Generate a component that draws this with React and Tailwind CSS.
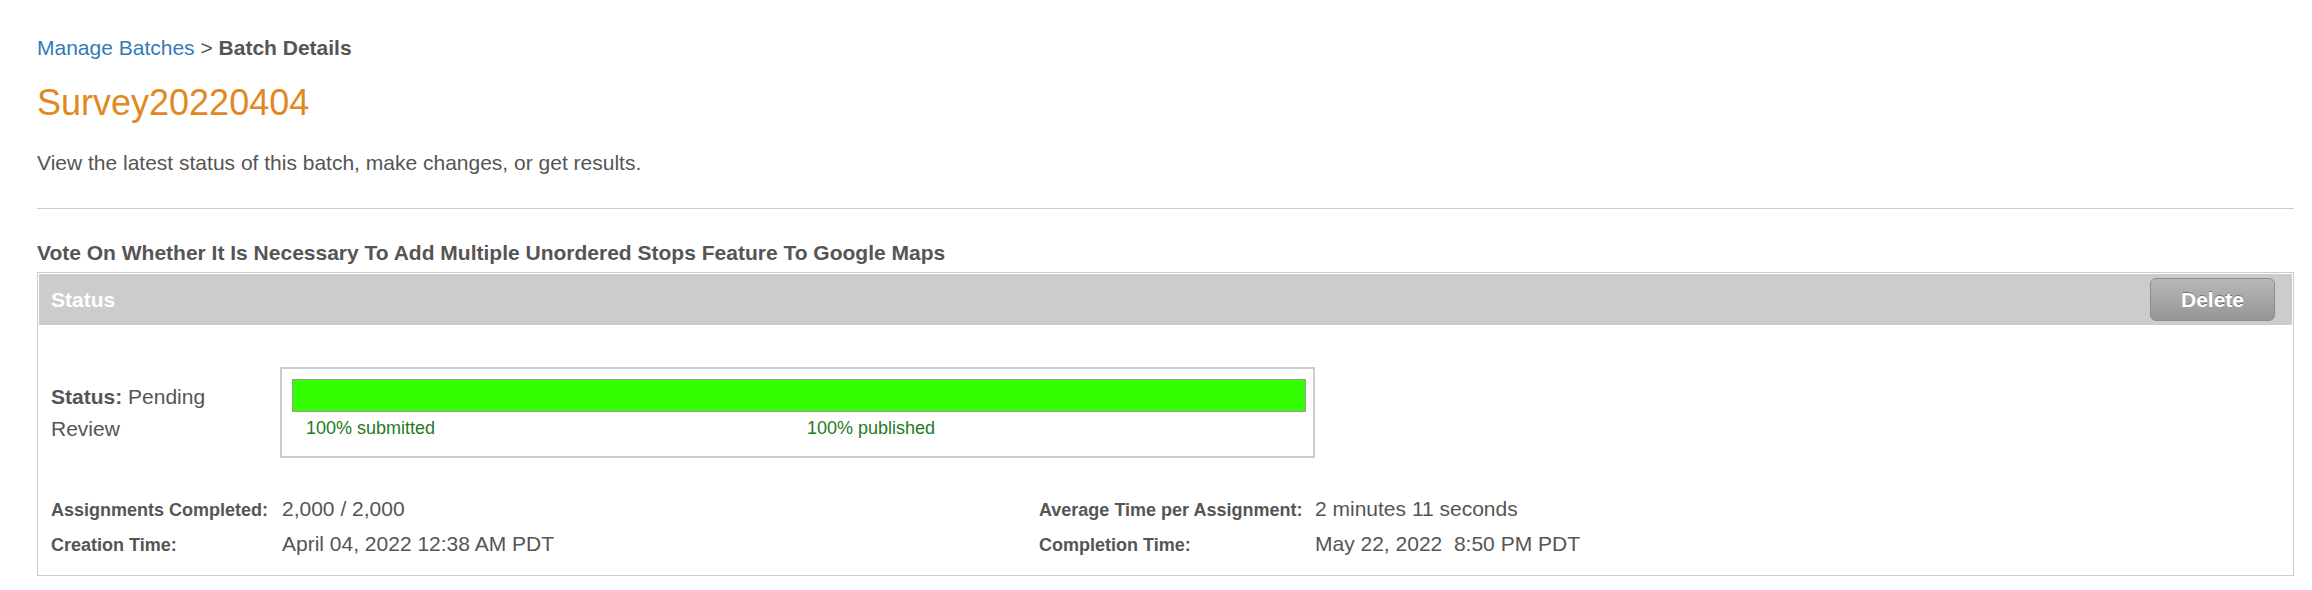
import React from "react";

const font = { fontFamily: '"Liberation Sans", Arial, Helvetica, sans-serif' };

const BatchDetails = () => {
  const stats = [
    { label: "Assignments Completed:", value: "2,000 / 2,000", label2: "Average Time per Assignment:", value2: "2 minutes 11 seconds" },
    { label: "Creation Time:", value: "April 04, 2022 12:38 AM PDT", label2: "Completion Time:", value2: "May 22, 2022\u00a0 8:50 PM PDT" },
  ];

  return (
    <div className="min-h-[590px] bg-white pl-[37px] pr-[18px] pt-[33px] text-[#555]" style={font}>
      {/* breadcrumb */}
      <div className="text-[21px] leading-[30px]">
        <a href="#" className="text-[#337ab7] hover:underline">Manage Batches</a>
        <span className="text-[#555]"> &gt; </span>
        <span className="font-bold text-[#555]">Batch Details</span>
      </div>

      <h1 className="mt-[20px] text-[36px] leading-[40px] font-normal text-[#e0891f]">Survey20220404</h1>

      <p className="mt-[25px] text-[21px] leading-[30px] text-[#555]">
        View the latest status of this batch, make changes, or get results.
      </p>

      <div className="mt-[30px] border-t border-[#ccc]" />

      <h2 className="mt-[29px] text-[21px] leading-[30px] font-bold text-[#555]">
        Vote On Whether It Is Necessary To Add Multiple Unordered Stops Feature To Google Maps
      </h2>

      {/* status box */}
      <div className="mt-[4px] border border-[#ccc] p-[1px]">
        <div className="flex h-[51px] items-center justify-between bg-[#ccc] pl-[12px] pr-[17px]">
          <span className="text-[21px] leading-[30px] font-bold text-white">Status</span>
          <button
            className="h-[43px] w-[125px] rounded-[6px] border border-[#8c8c8c] bg-gradient-to-b from-[#b8b8b8] to-[#969696] text-[21px] font-bold text-white [text-shadow:0_-1px_0_rgba(0,0,0,0.35)]"
          >
            Delete
          </button>
        </div>

        <div className="pl-[12px] pt-[42px] pb-[12px]">
          <div className="flex items-center">
            <div className="w-[180px] text-[21px] leading-[32px]">
              <span className="font-bold">Status:</span> Pending Review
            </div>
            <div className="ml-[49px] w-[1035px] border-2 border-[#ccc] pl-[10px] pr-[7px] pt-[10px] pb-[16px]">
              <div className="h-[33px] w-full border border-[#999] bg-[#33ff00]" />
              <div className="mt-[4px] flex text-[18px] leading-[24px] text-[#1f7a1f]">
                <div className="w-[515px] pl-[14px]">100% submitted</div>
                <div>100% published</div>
              </div>
            </div>
          </div>

          <div className="mt-[34px]">
            {stats.map((s) => (
              <div key={s.label} className="flex items-baseline leading-[34px]">
                <div className="w-[231px] text-[18px] font-bold">{s.label}</div>
                <div className="w-[757px] text-[21px]">{s.value}</div>
                <div className="w-[276px] text-[18px] font-bold">{s.label2}</div>
                <div className="text-[21px]">{s.value2}</div>
              </div>
            ))}
          </div>
        </div>
      </div>
    </div>
  );
};

export default function App() {
  return <BatchDetails />;
}
